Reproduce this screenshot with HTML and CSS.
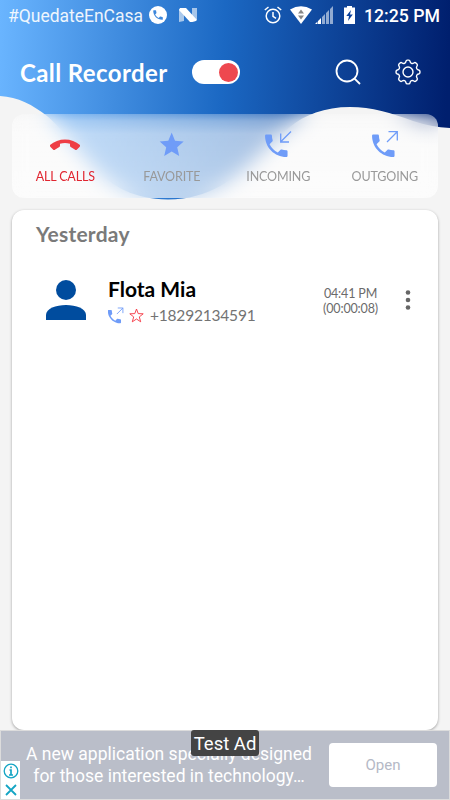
FILE: index.html
```html
<!DOCTYPE html>
<html>
<head>
	<meta charset="UTF-8">
	<title>Call Recorder</title>
	<link rel="stylesheet" href="styles.css">
</head>
<body>
	<svg class="wave" width="450" height="200" viewBox="0 0 450 200">
		<defs>
			<linearGradient id="sky" x1="0" y1="0" x2="450" y2="20" gradientUnits="userSpaceOnUse">
				<stop offset="0" stop-color="#6ab5ff"/>
				<stop offset=".5" stop-color="#1b68c3"/>
				<stop offset="1" stop-color="#001f6e"/>
			</linearGradient>
		</defs>
		<path fill="url(#sky)" d="M0 0H450V128Q431 127 413 121C391 113 372 107 350 107C325 107 304 115 290 127C258 150 232 199 168 199.500C100 199 84 148 47 116C33 105 18 97 0 96Z"/>
	</svg>
	<div class="status">
		<span class="carrier">#QuedateEnCasa</span>
		<svg class="st-call" width="18" height="18" viewBox="0 0 24 24"><circle cx="12" cy="12" r="12" fill="#fff"/><path fill="#3d87db" transform="translate(3.500 3.500) scale(.71)" d="M6.600 10.800c1.400 2.800 3.800 5.100 6.600 6.600l2.200-2.200c.3-.3.700-.4 1-.2 1.100.4 2.300.6 3.600.6.600 0 1 .4 1 1V20c0 .6-.4 1-1 1C10.600 21 3 13.400 3 4c0-.6.500-1 1-1h3.500c.6 0 1 .4 1 1 0 1.300.2 2.500.6 3.600.1.300 0 .7-.3 1z"/></svg>
		<svg class="st-n" width="18" height="14" viewBox="0 0 18 14"><path fill="#fff" opacity=".6" d="M0 1L5 4V13L0 14ZM13 0H18V12L13 10Z"/><path fill="#fff" d="M1 0H7L18 12Q16 14 11 14L0 2Z"/></svg>
		<svg class="st-alarm" width="18" height="18" viewBox="0 0 18 18" fill="none" stroke="#fff" stroke-width="1.500"><circle cx="9" cy="10" r="6.800"/><path d="M9 6V10.300L12 12.300M.8 4L4.500 1M17.200 4L13.500 1"/></svg>
		<svg class="st-wifi" width="22" height="18" viewBox="0 0 22 18"><path fill="#fff" d="M0 3.500Q11-3 22 3.500L11 18Z"/><path fill="#888" d="M8 7.500L11 3.500L14 7.500ZM8 9.500H14L11 13.500Z"/></svg>
		<svg class="st-signal" width="18" height="18" viewBox="0 0 18 18"><path fill="#fff" opacity=".55" d="M7 18V11L10 8V18ZM11 18V7L14 4V18ZM15 18V3L18 0V18Z"/><path fill="#fff" d="M0 18L2.500 15.500V18ZM3 18V15L6 12V18Z"/></svg>
		<svg class="st-battery" width="11" height="18" viewBox="0 0 11 18"><path fill="#fff" d="M3 0H8V1.500H11V18H0V1.500H3Z"/><path fill="#0b419b" d="M7 4L2.300 10H5L4 15L8.800 8.500H6Z"/></svg>
		<span class="clock">12:25 PM</span>
	</div>
	<div class="appbar">
		<h1 class="title">Call Recorder</h1>
		<div class="switch"><div class="knob"></div></div>
		<svg class="search" width="26" height="26" viewBox="0 0 26 26" fill="none" stroke="#fff" stroke-width="1.800"><circle cx="12" cy="12" r="10.500"/><path d="M19.300 19.300L25 25"/></svg>
		<svg class="gear" width="26" height="26" viewBox="0 0 24 24" fill="none" stroke="#fff" stroke-width="1.300" stroke-linejoin="round"><circle cx="12" cy="12" r="4.600"/><path d="M11.300 1H12.700Q13.700 1 13.900 2.200Q14.100 3.500 15.200 4Q16.300 4.500 17.400 3.700Q18.500 2.900 19.300 3.700L20.300 4.700Q21.100 5.500 20.300 6.600Q19.500 7.700 20 8.800Q20.500 9.900 21.800 10.100Q23 10.300 23 11.300V12.700Q23 13.700 21.800 13.900Q20.500 14.100 20 15.200Q19.500 16.300 20.300 17.400Q21.100 18.500 20.300 19.300L19.300 20.300Q18.500 21.100 17.400 20.300Q16.300 19.500 15.200 20Q14.100 20.500 13.900 21.800Q13.700 23 12.700 23H11.300Q10.300 23 10.100 21.800Q9.900 20.500 8.800 20Q7.700 19.500 6.600 20.300Q5.500 21.100 4.700 20.300L3.700 19.300Q2.900 18.500 3.700 17.400Q4.500 16.300 4 15.200Q3.500 14.100 2.200 13.900Q1 13.700 1 12.700V11.300Q1 10.300 2.200 10.100Q3.500 9.900 4 8.800Q4.500 7.700 3.700 6.600Q2.900 5.500 3.700 4.700L4.700 3.700Q5.500 2.900 6.600 3.700Q7.700 4.500 8.800 4Q9.900 3.500 10.100 2.200Q10.300 1 11.300 1Z"/></svg>
	</div>
	<ul class="tabs">
		<li class="tab active">
			<svg width="30" height="32" viewBox="0 0 30 32"><path fill="#ee3e46" d="M0 15C8 7.500 22 7.500 30 15Q30.500 16 29.500 17L27 19.500Q26 20.500 24.800 19.500L20.700 17Q20 16.500 20 15.500V13.700Q15 12.200 10 13.700V15.500Q10 16.500 9.300 17L5.200 19.500Q4 20.500 3 19.500L.5 17Q-.5 16 0 15Z"/></svg>
			<span class="label">ALL CALLS</span>
		</li>
		<li class="tab">
			<svg width="30" height="32" viewBox="0 0 30 32"><path fill="#6f9cf8" d="M14.700 2.500L18 10.700L26.700 11.500L20.200 17.300L22.200 26L14.700 21.500L7.200 26L9.200 17.300L2.700 11.500L11.300 10.700Z"/></svg>
			<span class="label">FAVORITE</span>
		</li>
		<li class="tab">
			<svg width="30" height="32" viewBox="0 0 30 32"><path fill="#6f9cf8" transform="translate(-1.700 .8) scale(1.250)" d="M6.600 10.800c1.400 2.800 3.800 5.100 6.600 6.600l2.200-2.200c.3-.3.700-.4 1-.2 1.100.4 2.300.6 3.600.6.600 0 1 .4 1 1V20c0 .6-.4 1-1 1C10.600 21 3 13.400 3 4c0-.6.500-1 1-1h3.500c.6 0 1 .4 1 1 0 1.300.2 2.500.6 3.600.1.300 0 .7-.3 1z"/><path fill="none" stroke="#6f9cf8" stroke-width="1.300" d="M28 1.500L18 11.500M17.700 3.500V12H26"/></svg>
			<span class="label">INCOMING</span>
		</li>
		<li class="tab">
			<svg width="30" height="32" viewBox="0 0 30 32"><path fill="#6f9cf8" transform="translate(-1.700 .8) scale(1.250)" d="M6.600 10.800c1.400 2.800 3.800 5.100 6.600 6.600l2.200-2.200c.3-.3.700-.4 1-.2 1.100.4 2.300.6 3.600.6.600 0 1 .4 1 1V20c0 .6-.4 1-1 1C10.600 21 3 13.400 3 4c0-.6.500-1 1-1h3.500c.6 0 1 .4 1 1 0 1.300.2 2.500.6 3.600.1.300 0 .7-.3 1z"/><path fill="none" stroke="#6f9cf8" stroke-width="1.300" d="M17 12L27.500 1.500M18.500 1.700H27.300V10.500"/></svg>
			<span class="label">OUTGOING</span>
		</li>
	</ul>
	<div class="card">
		<h2 class="day">Yesterday</h2>
		<div class="call">
			<svg class="avatar" width="40" height="40" viewBox="0 0 40 40" fill="#004c9e"><circle cx="20" cy="10" r="10"/><path d="M0 40V35C0 28.500 10 25 20 25S40 28.500 40 35V40Z"/></svg>
			<div class="who">
				<div class="name">Flota Mia</div>
				<div class="number">
					<svg width="16" height="17" viewBox="3 0 26 29"><path fill="#6f9cf8" transform="translate(-1.700 1.500) scale(1.250)" d="M6.600 10.800c1.400 2.800 3.800 5.100 6.600 6.600l2.200-2.200c.3-.3.700-.4 1-.2 1.100.4 2.300.6 3.600.6.600 0 1 .4 1 1V20c0 .6-.4 1-1 1C10.600 21 3 13.400 3 4c0-.6.500-1 1-1h3.500c.6 0 1 .4 1 1 0 1.300.2 2.500.6 3.600.1.300 0 .7-.3 1z"/><path fill="none" stroke="#6f9cf8" stroke-width="1.500" d="M17.500 12L28 1.500M19 1.700H27.800V10.500"/></svg>
					<svg class="fav" width="15" height="15" viewBox="0 0 15 15"><path fill="none" stroke="#f5333f" stroke-width=".9" d="M7.500 1L9.200 5.600L14.200 5.800L10.300 8.900L11.700 13.800L7.500 11L3.300 13.800L4.700 8.900L.8 5.800L5.800 5.600Z"/></svg>
					<span class="tel">+18292134591</span>
				</div>
			</div>
			<div class="time">04:41 PM<br>(00:00:08)</div>
			<svg class="more" width="6" height="20" viewBox="0 0 6 20" fill="#666"><circle cx="3" cy="2.500" r="2.300"/><circle cx="3" cy="10" r="2.300"/><circle cx="3" cy="17.500" r="2.300"/></svg>
		</div>
	</div>
	<div class="ad">
		<div class="adtext"><span class="line1">A new application specially designed</span><br><span class="line2">for those interested in technology…</span></div>
		<div class="open">Open</div>
		<div class="test">Test Ad</div>
		<div class="choices">
			<svg width="16" height="16" viewBox="0 0 16 16" fill="none" stroke="#14a5c4"><circle cx="8" cy="8" r="6.800" stroke-width="1.300"/><path stroke-width="1.700" d="M8 3.500V5.300M6.500 7H8V12M6 12H10"/></svg>
			<svg width="16" height="16" viewBox="0 0 16 16" fill="none" stroke="#14a5c4" stroke-width="1.800"><path d="M3 3L13 13M13 3L3 13"/></svg>
		</div>
	</div>
</body>
</html>
```
FILE: styles.css
```css
*{
	margin:0px;
	padding:0px;
	box-sizing: border-box;
}
body{
	width: 450px;
	height: 800px;
	overflow: hidden;
	background: #f4f4f4;
	font-family: Lato, sans-serif;
	display: flex;
	flex-direction: column;
}
svg{
	display: block;
	flex: none;
}
span, div{
	white-space: nowrap;
}
/* header shape, under everything */
.wave{
	position: absolute;
	left: 0;
	top: 0;
	z-index: -1;
}
.status{
	height: 32px;
	display: flex;
	align-items: center;
	padding: 0 10px 2px 8px;
	color: white;
	font-family: Roboto, sans-serif;
	font-size: 18px;
}
.carrier{
	width: 134px;
	padding-top: 1px;
	font-size: 17.5px;
	letter-spacing: -.02px;
	opacity: .9;
}
.st-call{
	margin-left: 7px;
}
.st-n{
	margin-left: 12px;
}
.st-alarm{
	margin-left: 67px;
	margin-right: 8px;
}
.st-signal{
	margin-left: 3px;
	margin-right: 11px;
}
.clock{
	margin-left: auto;
	padding-top: 1px;
	font-size: 17.7px;
	font-weight: 500;
}
.appbar{
	height: 82px;
	display: flex;
	align-items: center;
	padding: 0 29px 2px 20px;
}
.title{
	width: 172px;
	color: white;
	font-size: 24px;
	font-weight: 700;
	letter-spacing: .4px;
}
.switch{
	width: 48px;
	height: 24px;
	border-radius: 12px;
	background: white;
	display: flex;
	justify-content: flex-end;
	padding: 3px 2px;
}
.knob{
	width: 19px;
	height: 19px;
	border-radius: 50%;
	background: #ee484f;
}
.search{
	margin-left: auto;
	margin-right: 34px;
}
.tabs{
	height: 84px;
	margin: 0 12px;
	display: flex;
	list-style: none;
	border-radius: 12px;
	background: linear-gradient(rgba(255,255,255,.3), rgba(255,255,255,.5) 7px, rgba(255,255,255,.64) 20px, rgba(255,255,255,.69));
	backdrop-filter: blur(10px);
}
.tab{
	flex: 1;
	display: flex;
	flex-direction: column;
	align-items: center;
	padding-top: 16px;
}
.label{
	margin-top: 6px;
	padding-top: 1px;
	font-size: 12.5px;
	letter-spacing: -.15px;
	line-height: 16px;
	color: #999;
}
.active .label{
	color: #e02530;
}
.card{
	height: 520px;
	margin: 12px 12px 0;
	border-radius: 12px;
	background: white;
	box-shadow: 0 1px 3px rgba(0,0,0,.35);
	padding: 11px 28px 0 24px;
}
.day{
	font-size: 21px;
	line-height: 26px;
	font-weight: 700;
	letter-spacing: .25px;
	color: #7a7a7a;
}
.call{
	display: flex;
	align-items: center;
	height: 60px;
	margin-top: 23px;
	padding-left: 10px;
}
.who{
	margin-left: 22px;
	padding-top: 4px;
}
.name{
	font-size: 21px;
	line-height: 26px;
	font-weight: 700;
	color: #000;
}
.number{
	display: flex;
	align-items: center;
	height: 26px;
}
.fav{
	margin-left: 5px;
	margin-right: 6px;
}
.tel{
	font-size: 15.5px;
	letter-spacing: -.2px;
	color: #737373;
}
.time{
	margin-left: auto;
	padding-top: 1px;
	font-size: 12.5px;
	letter-spacing: -.15px;
	line-height: 15px;
	text-align: center;
	color: #6b6b6b;
}
.more{
	margin-left: 27px;
	margin-right: -1px;
}
.ad{
	position: relative;
	height: 70px;
	border: 1px solid #dcdcdc;
	background: #babec9;
	display: flex;
	align-items: center;
	padding-left: 24px;
	padding-right: 12px;
	font-family: Roboto, sans-serif;
}
.adtext{
	width: 288px;
	text-align: center;
	color: white;
	font-size: 17.5px;
	line-height: 22px;
}
.open{
	width: 108px;
	height: 44px;
	margin-left: auto;
	border-radius: 4px;
	background: white;
	color: #b5b9c6;
	font-size: 15px;
	line-height: 44px;
	text-align: center;
}
.test{
	position: absolute;
	left: 190px;
	top: -1px;
	width: 68px;
	height: 26px;
	border-radius: 3px;
	background: #444;
	color: white;
	font-size: 18.5px;
	line-height: 28px;
	text-align: center;
}
.choices{
	position: absolute;
	left: 0;
	bottom: 0;
	width: 19px;
	height: 38px;
	background: white;
	display: flex;
	flex-direction: column;
	align-items: center;
	justify-content: space-around;
}
```
